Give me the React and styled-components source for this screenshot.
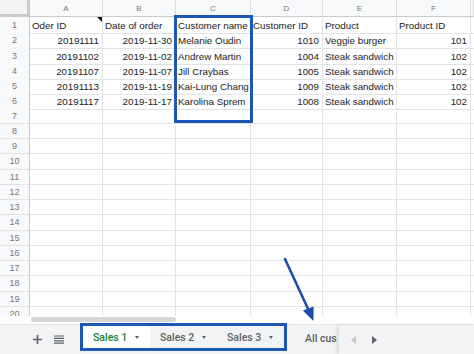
import React from "react";
import styled, { createGlobalStyle } from "styled-components";

const GlobalStyle = createGlobalStyle`
  html, body { margin: 0; padding: 0; background: #fff; }
  * { box-sizing: border-box; }
`;

const COLS = "30px 73px 73px 75px 72px 74px 74px 1fr";

const orders = [
  ["20191111", "2019-11-30", "Melanie Oudin", "1010", "Veggie burger", "101"],
  ["20191102", "2019-11-02", "Andrew Martin", "1004", "Steak sandwich", "102"],
  ["20191107", "2019-11-07", "Jill Craybas", "1005", "Steak sandwich", "102"],
  ["20191113", "2019-11-19", "Kai-Lung Chang", "1009", "Steak sandwich", "102"],
  ["20191117", "2019-11-17", "Karolina Sprem", "1008", "Steak sandwich", "102"],
];
const numeric = [true, true, false, true, false, true];

export default function App() {
  const rows = [["Oder ID", "Date of order", "Customer name", "Customer ID", "Product", "Product ID"], ...orders];
  while (rows.length < 20) rows.push(["", "", "", "", "", ""]);

  return (
    <Frame>
      <GlobalStyle />
      <SheetArea>
        <Grid>
          <HeaderRow>
            <Corner />
            {["A", "B", "C", "D", "E", "F", ""].map((l, i) => (
              <ColHead key={i}>{l}</ColHead>
            ))}
          </HeaderRow>
          {rows.map((r, ri) => (
            <Row key={ri}>
              <RowHead>{ri + 1}</RowHead>
              {r.map((v, ci) => (
                <Cell key={ci} $right={ri > 0 && numeric[ci]} $note={ri === 0 && ci === 0}>
                  {v}
                </Cell>
              ))}
              <Cell />
            </Row>
          ))}
        </Grid>
        <ScrollTrack>
          <Thumb />
        </ScrollTrack>
      </SheetArea>

      <TabBar>
        <IconBtn>
          <svg width="9" height="9" viewBox="0 0 9 9">
            <path d="M4.5 0v9M0 4.5h9" stroke="#5f6368" strokeWidth="1.6" />
          </svg>
        </IconBtn>
        <IconBtn>
          <svg width="10" height="9" viewBox="0 0 10 9">
            <path d="M0 1h10M0 3.4h10M0 5.8h10M0 8.2h10" stroke="#5f6368" strokeWidth="1.2" />
          </svg>
        </IconBtn>
        <TabGroup>
          <Tab $active>
            Sales 1 <Caret />
          </Tab>
          <Tab>
            Sales 2 <Caret />
          </Tab>
          <Tab>
            Sales 3 <Caret />
          </Tab>
        </TabGroup>
        <ClippedTab>All cus</ClippedTab>
        <Nav>
          <svg width="5" height="8" viewBox="0 0 5 8">
            <path d="M5 0L0 4l5 4z" fill="#c4c7cb" />
          </svg>
          <svg width="5" height="8" viewBox="0 0 5 8">
            <path d="M0 0l5 4-5 4z" fill="#5f6368" />
          </svg>
        </Nav>
      </TabBar>

      <Selection />
      <Arrow width="474" height="354" viewBox="0 0 474 354">
        <path d="M285 259 L309 311" stroke="#1b4fae" strokeWidth="2.6" strokeLinecap="round" />
        <path d="M302.8 310.6 L313.6 306.4 L313.5 321 Z" fill="#1b4fae" />
      </Arrow>
    </Frame>
  );
}

const Frame = styled.div`
  position: relative;
  width: 474px;
  height: 354px;
  overflow: hidden;
  display: flex;
  flex-direction: column;
  font-family: "Liberation Sans", Arial, sans-serif;
`;

const SheetArea = styled.div`
  height: 324px;
  display: flex;
  flex-direction: column;
`;

const Grid = styled.div`
  height: 316px;
  overflow: hidden;
`;

const HeaderRow = styled.div`
  display: grid;
  grid-template-columns: ${COLS};
  height: 17px;
  background: #f8f9fa;
  border-bottom: 1px solid #c8cacc;
`;

const Corner = styled.div`
  background: #f3f3f3;
  border-right: 3px solid #c8cacc;
  border-bottom: 2px solid #c8cacc;
`;

const ColHead = styled.div`
  border-right: 1px solid #dcdcdc;
  font-size: 8px;
  color: #777;
  display: flex;
  align-items: center;
  justify-content: center;
`;

const Row = styled.div`
  display: grid;
  grid-template-columns: ${COLS};
  height: 15.25px;
`;

const RowHead = styled.div`
  background: #f8f9fa;
  border-right: 1px solid #c8cacc;
  border-bottom: 1px solid #e2e3e3;
  font-size: 9px;
  color: #777;
  display: flex;
  align-items: center;
  justify-content: center;
`;

const Cell = styled.div`
  position: relative;
  border-right: 1px solid #e2e3e3;
  border-bottom: 1px solid #e2e3e3;
  font-size: 9.8px;
  color: #222;
  line-height: 15px;
  padding: 1px 3px 0 2px;
  white-space: nowrap;
  overflow: visible;
  text-align: ${(p) => (p.$right ? "right" : "left")};
  &::after {
    content: "";
    display: ${(p) => (p.$note ? "block" : "none")};
    position: absolute;
    top: 0;
    right: 0;
    border-top: 5px solid #111;
    border-left: 5px solid transparent;
  }
`;

const ScrollTrack = styled.div`
  height: 8px;
  background: #fff;
  padding: 1px 0 0 31px;
`;

const Thumb = styled.div`
  width: 145px;
  height: 5px;
  border-radius: 3px;
  background: #d6d7d9;
`;

const TabBar = styled.div`
  height: 30px;
  background: #f1f3f4;
  border-top: 1px solid #e0e2e4;
  display: flex;
  align-items: center;
  font-family: Roboto, "Liberation Sans", sans-serif;
  font-weight: 500;
  font-size: 10.5px;
  color: #5f6368;
`;

const IconBtn = styled.div`
  width: 12px;
  height: 12px;
  display: flex;
  align-items: center;
  justify-content: center;
  margin-left: 10px;
  &:first-child {
    margin-left: 31px;
  }
`;

const TabGroup = styled.div`
  align-self: flex-start;
  margin: -2px 0 0 15px;
  height: 28px;
  width: 207px;
  border: 3px solid #1c57b5;
  display: flex;
`;

const Tab = styled.div`
  flex: 1;
  display: flex;
  align-items: center;
  gap: 8px;
  padding: 0 0 0 10px;
  background: ${(p) => (p.$active ? "#fff" : "transparent")};
  color: ${(p) => (p.$active ? "#188038" : "#5f6368")};
`;

const Caret = styled.span`
  width: 0;
  height: 0;
  border-left: 2.5px solid transparent;
  border-right: 2.5px solid transparent;
  border-top: 3px solid #5f6368;
`;

const ClippedTab = styled.div`
  width: 51px;
  padding-left: 18px;
  white-space: nowrap;
  overflow: hidden;
  height: 100%;
  line-height: 28px;
`;

const Nav = styled.div`
  flex: 1;
  height: 100%;
  display: flex;
  align-items: center;
  gap: 16px;
  padding-left: 12px;
  border-left: 1px solid #e3e5e7;
  box-shadow: -2px 0 3px rgba(0, 0, 0, 0.08);
`;

const Selection = styled.div`
  position: absolute;
  left: 174px;
  top: 15px;
  width: 79px;
  height: 108px;
  border: 3px solid #1c57b5;
  pointer-events: none;
`;

const Arrow = styled.svg`
  position: absolute;
  left: 0;
  top: 0;
  pointer-events: none;
`;
